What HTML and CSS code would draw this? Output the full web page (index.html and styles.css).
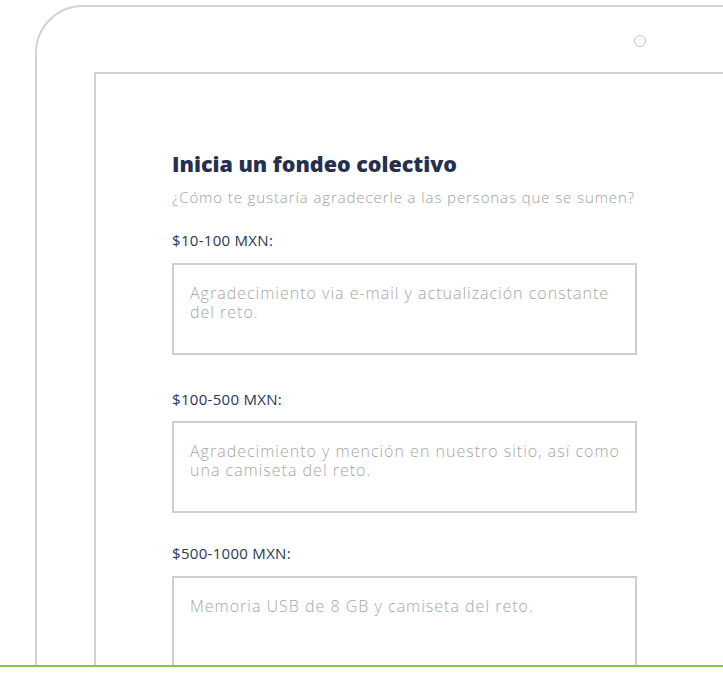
FILE: index.html
```html
<!DOCTYPE html>
<html lang="es">
<head>
    <meta charset="UTF-8">
    <meta name="viewport" content="width=device-width, initial-scale=1.0">
    <title>Inicia un fondeo colectivo</title>
    <link rel="stylesheet" href="styles.css">
</head>
<body>
    <div class="stage">
        <div class="device">
            <div class="device-top">
                <span class="camera"></span>
            </div>
            <div class="screen">
                <h1>Inicia un fondeo colectivo</h1>
                <p class="subtitle">¿Cómo te gustaría agradecerle a las personas que se sumen?</p>

                <label class="tier tier-first" for="tier1">$10-100 MXN:</label>
                <textarea id="tier1" class="reward">Agradecimiento via e-mail y actualización constante del reto.</textarea>

                <label class="tier tier-second" for="tier2">$100-500 MXN:</label>
                <textarea id="tier2" class="reward">Agradecimiento y mención en nuestro sitio, así como una camiseta del reto.</textarea>

                <label class="tier tier-third" for="tier3">$500-1000 MXN:</label>
                <textarea id="tier3" class="reward">Memoria USB de 8 GB y camiseta del reto.</textarea>
            </div>
        </div>
    </div>
    <div class="ground"></div>
</body>
</html>
```

FILE: styles.css
```css
body {
    margin: 0;
    font-family: "Open Sans", "Lato", sans-serif;
    background-color: #fff;
    overflow: hidden;
}

.stage {
    height: 665px;
    overflow: hidden;
}

.device {
    margin: 5px 0 0 35px;
    width: 800px;
    height: 800px;
    border: 2px solid #d2d2d2;
    border-radius: 48px 48px 0 0;
}

.device-top {
    height: 65px;
    display: flex;
    align-items: flex-start;
    padding-left: 597px;
    box-sizing: border-box;
    padding-top: 28px;
}

.camera {
    width: 10px;
    height: 10px;
    border: 1.5px solid #c4c4c4;
    border-radius: 50%;
}

.screen {
    margin-left: 57px;
    height: 700px;
    border-top: 2px solid #d2d2d2;
    border-left: 2px solid #d2d2d2;
    padding: 76px 0 0 76px;
    display: flex;
    flex-direction: column;
    align-items: flex-start;
}

h1 {
    margin: 0;
    font-size: 21.5px;
    line-height: 28px;
    font-weight: 800;
    color: #25304f;
}

.subtitle {
    margin: 9px 0 0;
    font-size: 15px;
    line-height: 20px;
    font-weight: 300;
    color: #a0a0a0;
    letter-spacing: 0.9px;
}

.tier {
    font-size: 15px;
    line-height: 20px;
    color: #2b3757;
    letter-spacing: 0.3px;
}

.tier-first {
    margin-top: 23px;
}

.tier-second {
    margin-top: 34px;
}

.tier-third {
    margin-top: 30px;
}

.reward {
    margin-top: 13px;
    width: 465px;
    height: 92px;
    box-sizing: border-box;
    border: 2px solid #cfcfcf;
    border-radius: 0;
    padding: 19px 8px 19px 16px;
    font-family: "Open Sans", "Lato", sans-serif;
    font-size: 16px;
    line-height: 19px;
    font-weight: 300;
    color: #a6a6a6;
    letter-spacing: 1px;
    resize: none;
    overflow: hidden;
    outline: none;
}

.tier-second + .reward {
    margin-top: 12px;
}

.ground {
    border-top: 2px solid #8cc152;
}
```
